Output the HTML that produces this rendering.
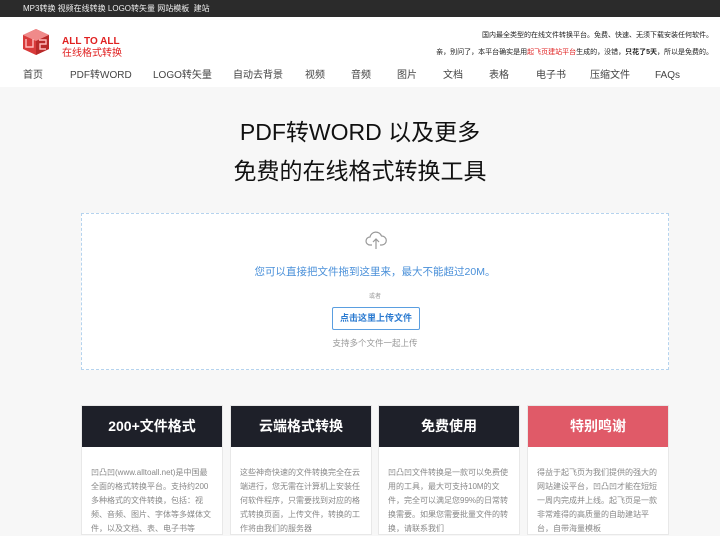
<!DOCTYPE html>
<html><head><meta charset="utf-8"><style>
*{margin:0;padding:0;box-sizing:border-box}
body{width:720px;height:529px;overflow:hidden;background:#f7f7f7;font-family:"Liberation Sans","Noto Sans CJK SC",sans-serif;color:#333}
.top{height:17px;background:#2b2b2b;color:#eee;font-size:8px;line-height:17px;padding-left:23px}
.hdr{background:#fff;height:70px;position:relative}
.logo{position:absolute;left:22px;top:11px}
.lt{position:absolute;left:62px;top:19px;color:#e02020;font-size:10px;font-weight:bold;line-height:12px}
.lt2{font-weight:normal;font-size:10px}
.r1,.r2{position:absolute;right:7px;font-size:7px;color:#222;white-space:nowrap}
.r1{top:13px}.r2{top:30px}
.nav{position:absolute;top:52px;left:0;width:720px;font-size:10px;color:#444}
.nav span{position:absolute;top:0;white-space:nowrap;line-height:14px;height:14px}
h1{position:absolute;width:720px;text-align:center;font-weight:normal;font-size:23px;color:#111}
.box{position:absolute;left:81px;top:213px;width:588px;height:157px;background:#fff;border:1px dashed #b5d3ee;text-align:center}
.card{position:absolute;top:405px;width:142px;height:130px;background:#fff;border:1px solid #e8e8e8}
.card .h{height:41px;background:#1e2029;color:#fff;font-weight:bold;font-size:14px;text-align:center;line-height:41px}
.card p{font-size:8px;color:#888;line-height:14px;padding:19px 8px 0 9px}
</style></head><body>
<div class="top">MP3转换 视频在线转换 LOGO转矢量 网站模板 &nbsp;建站</div>
<div class="hdr">
<svg class="logo" width="28" height="28" viewBox="0 0 28 28"><polygon points="14,1 27,7 27,21 14,27 1,21 1,7" fill="#d83a3a"/><polygon points="14,1 27,7 14,13 1,7" fill="#f08a8a"/><polygon points="14,13 27,7 27,21 14,27" fill="#b82a2a"/><path d="M4 11v8h7v-8M17 12h7v4h-6v5h6" stroke="#fbb" stroke-width="1.4" fill="none"/></svg>
<div class="lt">ALL TO ALL<br><span class="lt2">在线格式转换</span></div>
<div class="r1">国内最全类型的在线文件转换平台。免费、快速、无须下载安装任何软件。</div>
<div class="r2">亲，别问了，本平台确实是用<span style="color:#e02020">起飞页建站平台</span>生成的，没错，<b>只花了5天</b>，所以是免费的。</div>
<div class="nav"><span style="left:23px">首页</span><span style="left:70px">PDF转WORD</span><span style="left:153px">LOGO转矢量</span><span style="left:233px">自动去背景</span><span style="left:305px">视频</span><span style="left:351px">音频</span><span style="left:397px">图片</span><span style="left:443px">文档</span><span style="left:489px">表格</span><span style="left:536px">电子书</span><span style="left:590px">压缩文件</span><span style="left:655px;top:0">FAQs</span></div>
</div>
<h1 style="top:113px">PDF转WORD 以及更多</h1>
<h1 style="top:152px">免费的在线格式转换工具</h1>
<div class="box">
<svg style="position:absolute;left:283px;top:16px" width="22" height="20" viewBox="0 0 22 20"><path d="M7 15H5a4 4 0 0 1 0-8 6 6 0 0 1 11.5-1A4.5 4.5 0 0 1 17 15h-2M11 19V9M8 12l3-3 3 3" stroke="#999" stroke-width="1.2" fill="none"/></svg>
<div style="position:absolute;top:50px;width:100%;font-size:10.5px;color:#4a90d9">您可以直接把文件拖到这里来，最大不能超过20M。</div>
<div style="position:absolute;top:77px;width:100%;font-size:6px;color:#999">或者</div>
<div style="position:absolute;left:250px;top:93px;width:88px;height:23px;border:1px solid #5a9ee0;border-radius:2px;color:#2a7ad0;font-size:9px;font-weight:bold;line-height:21px">点击这里上传文件</div>
<div style="position:absolute;top:123px;width:100%;font-size:8.5px;color:#999">支持多个文件一起上传</div>
</div>
<div class="card" style="left:81px"><div class="h">200+文件格式</div><p>凹凸凹(www.alltoall.net)是中国最全面的格式转换平台。支持约200多种格式的文件转换，包括：视频、音频、图片、字体等多媒体文件，以及文档、表、电子书等</p></div>
<div class="card" style="left:230px"><div class="h">云端格式转换</div><p>这些神奇快速的文件转换完全在云端进行，您无需在计算机上安装任何软件程序，只需要找到对应的格式转换页面，上传文件，转换的工作将由我们的服务器</p></div>
<div class="card" style="left:378px"><div class="h">免费使用</div><p>凹凸凹文件转换是一款可以免费使用的工具，最大可支持10M的文件，完全可以满足您99%的日常转换需要。如果您需要批量文件的转换，请联系我们</p></div>
<div class="card" style="left:527px"><div class="h" style="background:#e05a68">特别鸣谢</div><p>得益于起飞页为我们提供的强大的网站建设平台，凹凸凹才能在短短一周内完成并上线。起飞页是一款非常难得的高质量的自助建站平台，自带海量模板</p></div>
</body></html>
